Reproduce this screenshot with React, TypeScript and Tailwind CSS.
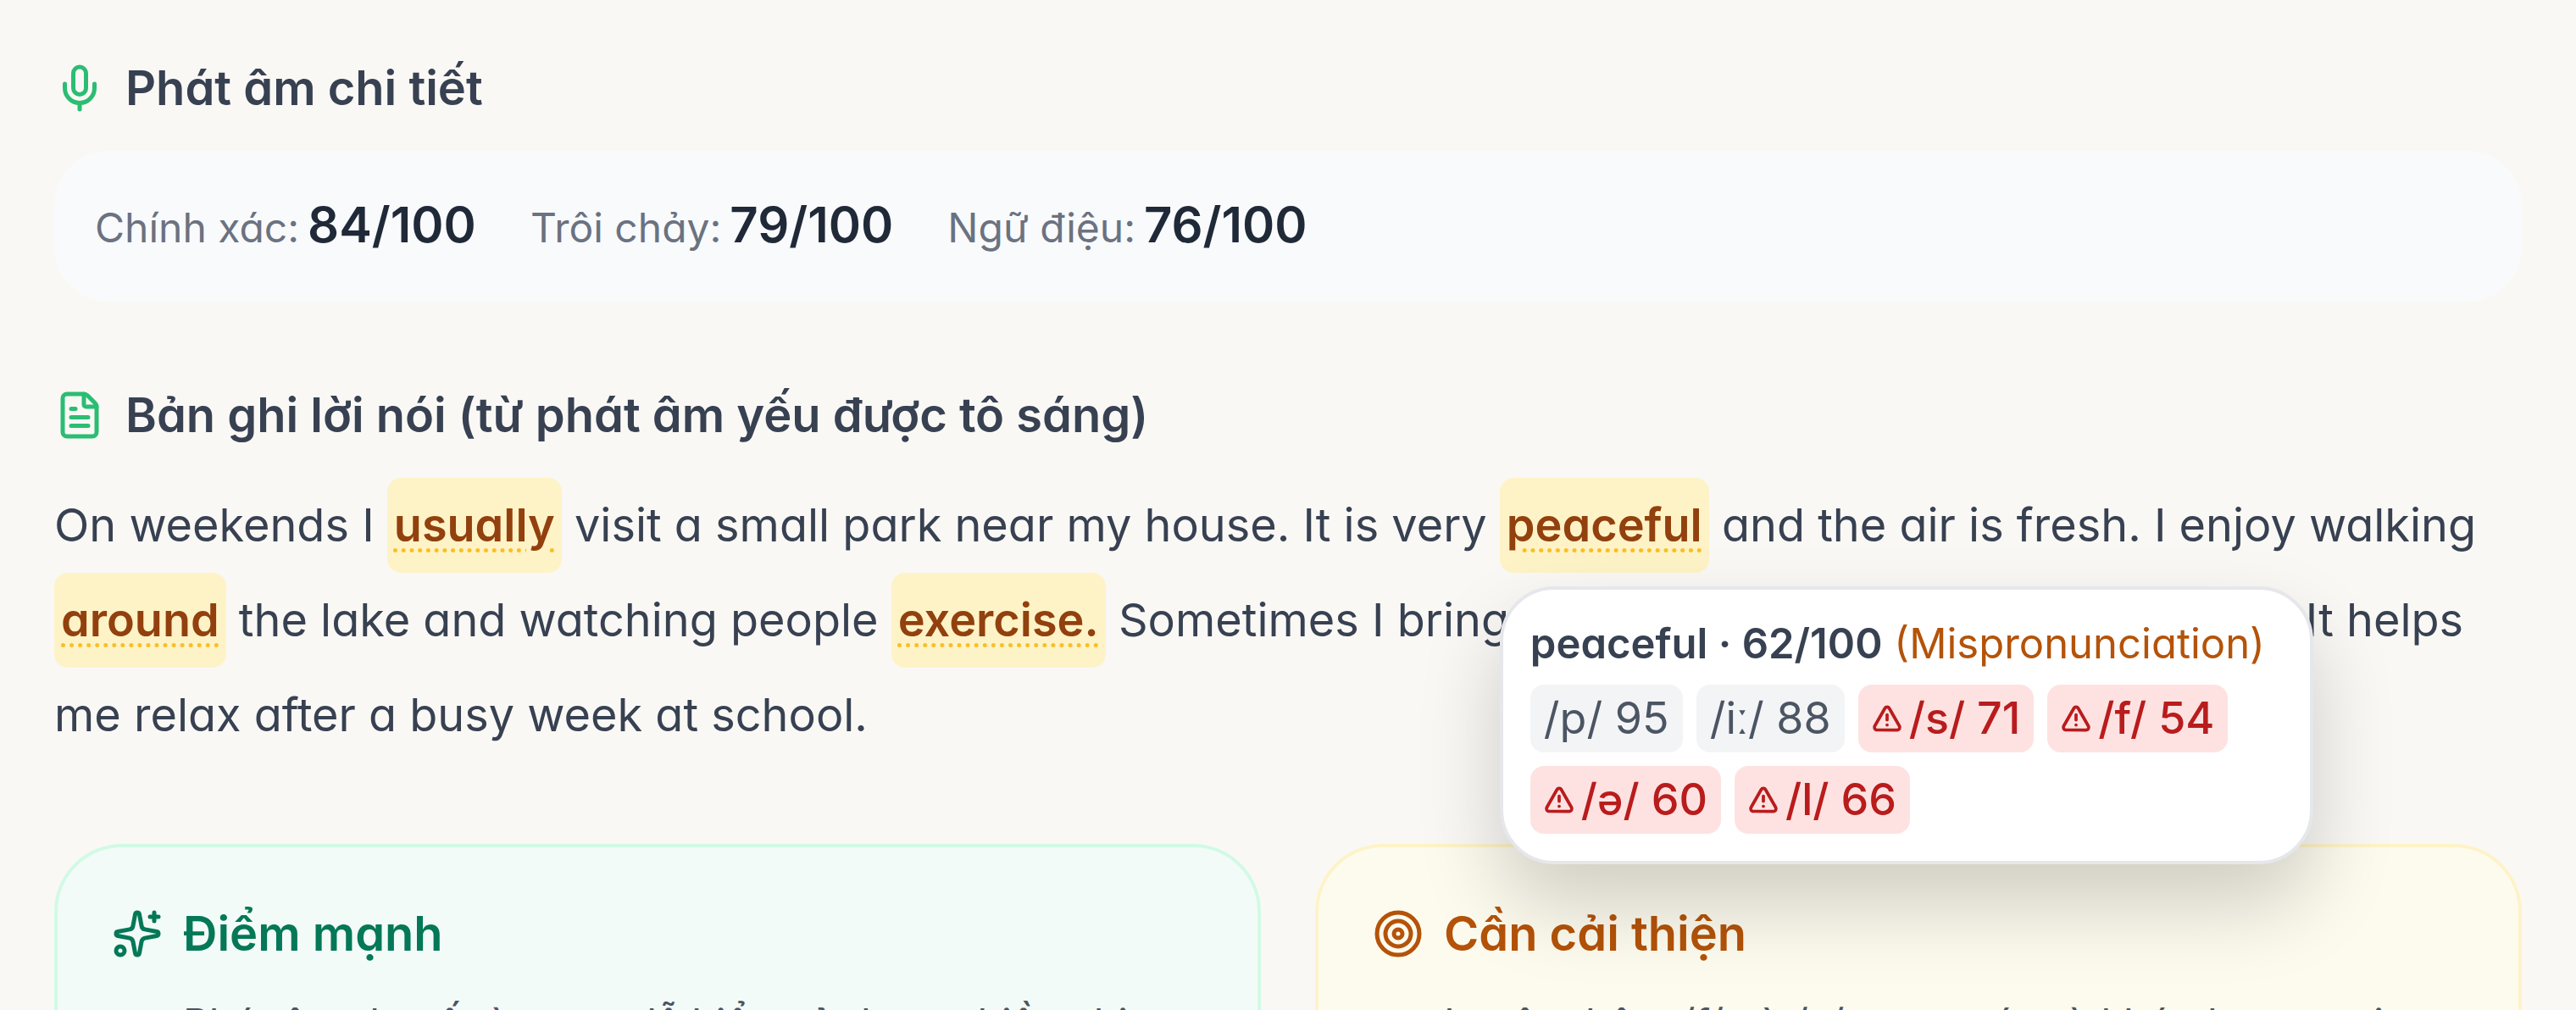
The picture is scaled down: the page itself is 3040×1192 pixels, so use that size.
import type { ReactNode } from "react";
import { FileText, Mic, Sparkles, Target, TriangleAlert } from "lucide-react";

type Phoneme = { symbol: string; score: number; weak?: boolean };

const stats = [
  { label: "Chính xác", value: 84 },
  { label: "Trôi chảy", value: 79 },
  { label: "Ngữ điệu", value: 76 },
];

const phonemes: Phoneme[] = [
  { symbol: "/p/", score: 95 },
  { symbol: "/iː/", score: 88 },
  { symbol: "/s/", score: 71, weak: true },
  { symbol: "/f/", score: 54, weak: true },
  { symbol: "/ə/", score: 60, weak: true },
  { symbol: "/l/", score: 66, weak: true },
];

function SectionTitle({ icon, children }: { icon: ReactNode; children: ReactNode }) {
  return (
    <h2 className="flex items-center gap-6 text-[56px] leading-[76px] font-semibold">
      {icon}
      <span>{children}</span>
    </h2>
  );
}

function WeakWord({ children }: { children: ReactNode }) {
  return (
    <button
      type="button"
      className="inline-block rounded-2xl bg-[#fef3c7] px-2 leading-[112px] font-semibold text-[#92400e] underline decoration-[#fbbf24] decoration-dotted decoration-[5px] underline-offset-[8px]"
    >
      {children}
    </button>
  );
}

function PhonemeChip({ symbol, score, weak }: Phoneme) {
  return weak ? (
    <li className="flex h-20 items-center gap-2 rounded-2xl bg-[#fee2e2] px-4 font-medium text-[#b91c1c]">
      <TriangleAlert className="size-9" strokeWidth={2.5} aria-hidden />
      <span>{symbol} {score}</span>
    </li>
  ) : (
    <li className="flex h-20 items-center rounded-2xl bg-[#f3f4f6] px-4 text-[#4b5563]">
      {symbol} {score}
    </li>
  );
}

function WordPopover() {
  return (
    <div
      role="tooltip"
      className="absolute top-full left-0 z-10 mt-4 w-[960px] rounded-[64px] border-4 border-[#e5e7eb] bg-white p-8 leading-[64px] shadow-[0_48px_96px_rgba(0,0,0,0.18)]"
    >
      <p className="mb-4 text-[49px] leading-[64px] whitespace-nowrap">
        <strong className="font-semibold">peaceful · 62/100</strong>{" "}
        <span className="text-[#b45309]">(Mispronunciation)</span>
      </p>
      <ul className="flex flex-wrap gap-4 text-[52px] leading-[64px]">
        {phonemes.map((p) => (
          <PhonemeChip key={p.symbol} {...p} />
        ))}
      </ul>
    </div>
  );
}

export default function App() {
  return (
    <main className="flex h-screen flex-col gap-24 overflow-hidden bg-[#faf8f5] px-16 pt-[66px] font-['Inter','Noto_Sans',sans-serif] text-[#374151] [font-feature-settings:'cv11']">
      <section className="flex flex-col gap-9">
        <SectionTitle icon={<Mic className="size-[60px] text-[#2bbd73]" aria-hidden />}>
          Phát âm chi tiết
        </SectionTitle>
        <dl className="flex flex-wrap gap-16 rounded-[64px] bg-[#f9fafc] px-12 py-10">
          {stats.map((s) => (
            <div key={s.label} className="flex items-baseline gap-2.5 leading-[94px]">
              <dt className="text-[48px] text-[#6b7280]">{s.label}:</dt>
              <dd className="text-[58px] font-semibold text-[#1f2937]">{s.value}/100</dd>
            </div>
          ))}
        </dl>
      </section>

      <section className="flex flex-col gap-9">
        <SectionTitle icon={<FileText className="size-[60px] text-[#2bbd73]" aria-hidden />}>
          Bản ghi lời nói (từ phát âm yếu được tô sáng)
        </SectionTitle>
        <div className="text-[54px] leading-[112px]">
          On weekends I <WeakWord>usually</WeakWord> visit a small park near my house. It is very{" "}
          <span className="relative inline-block">
            <WeakWord>peaceful</WeakWord>
            <WordPopover />
          </span>{" "}
          and the air is fresh. I enjoy walking <WeakWord>around</WeakWord> the lake and watching people{" "}
          <WeakWord>exercise.</WeakWord> Sometimes I bring a book and read under a large tree. It helps me
          relax after a busy week at school.
        </div>
      </section>

      <div className="grid grid-cols-2 gap-16">
        <section className="rounded-[80px] border-4 border-[#d1fae5] bg-[#f2fbf7] p-16">
          <div className="text-[#047857]">
            <SectionTitle icon={<Sparkles className="size-[60px]" aria-hidden />}>Điểm mạnh</SectionTitle>
          </div>
          <ul className="mt-7 list-disc pl-[84px] text-[48px] leading-[80px] text-[#4b5563]">
            <li>Phát âm đa số từ vựng dễ hiểu, tả được nhiều chi tiết.</li>
          </ul>
        </section>
        <section className="rounded-[80px] border-4 border-[#fef3c7] bg-[#fdfbee] p-16">
          <div className="text-[#b45309]">
            <SectionTitle icon={<Target className="size-[60px]" aria-hidden />}>Cần cải thiện</SectionTitle>
          </div>
          <ul className="mt-7 list-disc pl-[84px] text-[48px] leading-[80px] text-[#4b5563]">
            <li>Luyện thêm /f/ và /s/ trong các từ khó như exercise.</li>
          </ul>
        </section>
      </div>
    </main>
  );
}
